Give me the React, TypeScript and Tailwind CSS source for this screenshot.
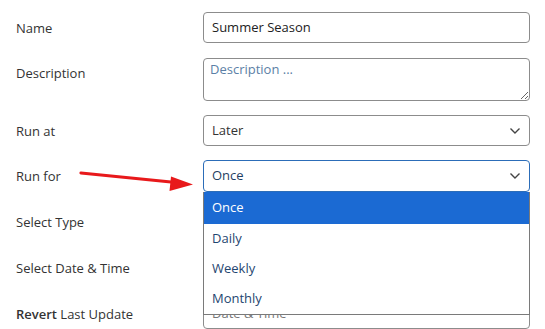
import React from 'react';

const font = { fontFamily: '"Open Sans", "Noto Sans", sans-serif' };

const Chevron = () => (
  <svg width="12" height="8" viewBox="0 0 12 8" className="absolute right-[8px] top-1/2 -translate-y-1/2">
    <polyline points="1.5,1.5 6,6 10.5,1.5" fill="none" stroke="#444" strokeWidth="1.4" />
  </svg>
);

const Label = ({ children, className = '' }: { children: React.ReactNode; className?: string }) => (
  <div className={`w-[203px] shrink-0 pl-[16px] text-[13px] text-[#333] leading-[20px] ${className}`}>{children}</div>
);

const options = ['Once', 'Daily', 'Weekly', 'Monthly'];

export default function App() {
  return (
    <div className="relative w-[545px] h-[329px] bg-white overflow-hidden" style={font}>
      <div className="flex flex-col pt-[12px]">
        {/* Name */}
        <div className="flex items-center h-[31px]">
          <Label>Name</Label>
          <div className="w-[327px] h-full border border-[#8c8c8c] rounded-[4px] flex items-center px-[8px] text-[13px] text-[#222]">
            Summer Season
          </div>
        </div>

        {/* Description */}
        <div className="flex items-start mt-[15px]">
          <Label className="pt-[5px]">Description</Label>
          <textarea
            readOnly
            placeholder="Description ..."
            className="w-[327px] h-[43px] border border-[#8c8c8c] rounded-[4px] px-[6px] pt-[1px] text-[13px] leading-[18px] outline-none placeholder:text-[#5b7fa6]"
            style={font}
          />
        </div>

        {/* Run at */}
        <div className="flex items-center h-[31px] mt-[14px]">
          <Label>Run at</Label>
          <div className="relative w-[327px] h-full border border-[#8c8c8c] rounded-[4px] flex items-center px-[8px] text-[13px] text-[#333]">
            Later
            <Chevron />
          </div>
        </div>

        {/* Run for */}
        <div className="flex items-center h-[32px] mt-[14px]">
          <Label>Run for</Label>
          <div className="relative w-[327px] h-full">
            <div className="relative h-full border-[1.5px] border-[#2c6db8] rounded-[4px] flex items-center px-[8px] text-[13px] text-[#1f3f63]">
              Once
              <Chevron />
            </div>
            <div className="absolute left-0 top-full w-full z-10 bg-white border border-[#7a7a7a] border-t-0">
              {options.map((o, i) => (
                <div
                  key={o}
                  className={`flex items-center px-[8px] text-[13px] ${
                    i === 0 ? 'bg-[#1b6ad3] text-white h-[32px]' : 'text-[#1f4670] h-[30px]'
                  }`}
                >
                  {o}
                </div>
              ))}
            </div>
          </div>
        </div>

        {/* Select Type */}
        <div className="flex items-center h-[31px] mt-[14px]">
          <Label>Select Type</Label>
          <div className="w-[327px] h-full border border-[#8c8c8c] rounded-[4px]" />
        </div>

        {/* Select Date & Time */}
        <div className="flex items-center h-[31px] mt-[15px]">
          <Label>Select Date &amp; Time</Label>
          <div className="w-[327px] h-full border border-[#8c8c8c] rounded-[4px]" />
        </div>

        {/* Revert */}
        <div className="flex items-center h-[31px] mt-[15px]">
          <Label>
            <span className="font-semibold">Revert</span> Last Update
          </Label>
          <div className="w-[327px] h-full border border-[#8c8c8c] rounded-[4px] flex items-center px-[8px] text-[13px] text-[#777]">
            Date &amp; Time
          </div>
        </div>
      </div>

      {/* annotation arrow */}
      <svg className="absolute left-0 top-0 pointer-events-none" width="545" height="329">
        <line x1="81" y1="173" x2="176" y2="182.5" stroke="#e8191b" strokeWidth="3.2" strokeLinecap="round" />
        <polygon points="193,184.5 171,176.5 169.5,191" fill="#e8191b" />
      </svg>
    </div>
  );
}
